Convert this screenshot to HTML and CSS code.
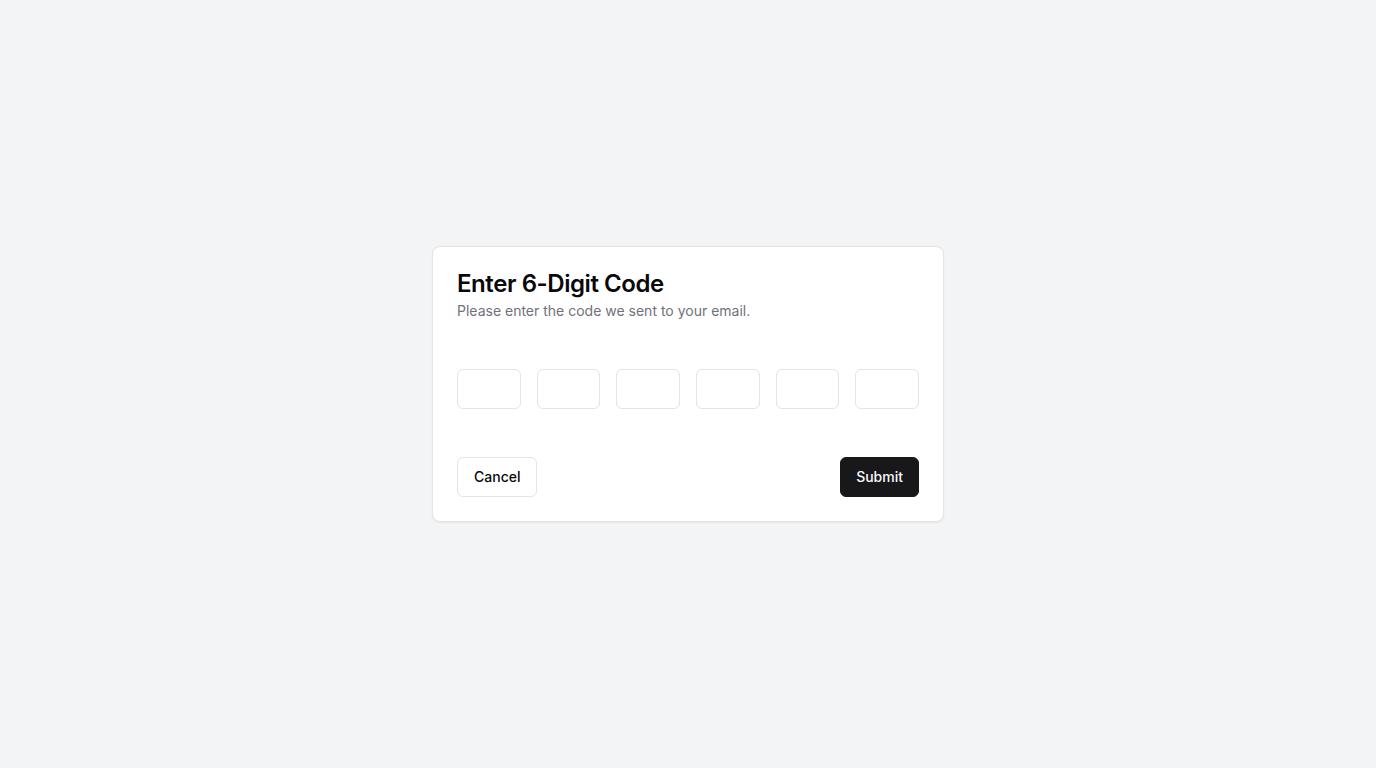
FILE: index.html
```html
<!DOCTYPE html>
<html lang="en">
<head>
<meta charset="utf-8">
<title>Enter 6-Digit Code</title>
<link rel="stylesheet" href="styles.css">
</head>
<body>
<main class="page">
  <section class="card">
    <header class="card-header">
      <h1 class="card-title">Enter 6-Digit Code</h1>
      <p class="card-desc">Please enter the code we sent to your email.</p>
    </header>
    <div class="code-row">
      <input class="code-input" type="text" maxlength="1" inputmode="numeric" aria-label="Digit 1">
      <input class="code-input" type="text" maxlength="1" inputmode="numeric" aria-label="Digit 2">
      <input class="code-input" type="text" maxlength="1" inputmode="numeric" aria-label="Digit 3">
      <input class="code-input" type="text" maxlength="1" inputmode="numeric" aria-label="Digit 4">
      <input class="code-input" type="text" maxlength="1" inputmode="numeric" aria-label="Digit 5">
      <input class="code-input" type="text" maxlength="1" inputmode="numeric" aria-label="Digit 6">
    </div>
    <footer class="card-footer">
      <button class="btn btn-outline" type="button">Cancel</button>
      <button class="btn btn-primary" type="submit">Submit</button>
    </footer>
  </section>
</main>
</body>
</html>
```

FILE: styles.css
```css
* { box-sizing: border-box; }
html, body { margin: 0; padding: 0; }
body {
  background: #f3f4f6;
  font-family: Inter, "Liberation Sans", sans-serif;
  color: #09090b;
}
.page {
  min-height: 100vh;
  display: flex;
  align-items: center;
  justify-content: center;
}
.card {
  width: 512px;
  background: #ffffff;
  border: 1px solid #e4e4e7;
  border-radius: 8px;
  box-shadow: 0 1px 2px rgba(0,0,0,0.05);
  padding: 24px;
}
.card-header {
  display: flex;
  flex-direction: column;
  gap: 5px;
}
.card-title {
  margin: 0;
  font-size: 24px;
  line-height: 25px;
  font-weight: 600;
  letter-spacing: -0.018em;
  color: #09090b;
}
.card-desc {
  margin: 0;
  font-size: 14px;
  line-height: 20px;
  color: #71717a;
}
.code-row {
  display: flex;
  gap: 16px;
  margin-top: 48px;
}
.code-input {
  flex: 1;
  min-width: 0;
  height: 40px;
  border: 1px solid #e4e4e7;
  border-radius: 6px;
  background: #fff;
  font-family: inherit;
  font-size: 16px;
  text-align: center;
  outline: none;
}
.card-footer {
  display: flex;
  justify-content: space-between;
  margin-top: 48px;
}
.btn {
  height: 40px;
  padding: 0 16px 1px;
  border-radius: 6px;
  font-family: inherit;
  font-size: 14px;
  font-weight: 500;
  cursor: pointer;
}
.btn-outline {
  background: #fff;
  border: 1px solid #e4e4e7;
  color: #09090b;
}
.btn-primary {
  padding: 0 15px 1px;
  background: #18181b;
  border: 1px solid #18181b;
  color: #fafafa;
}
```
